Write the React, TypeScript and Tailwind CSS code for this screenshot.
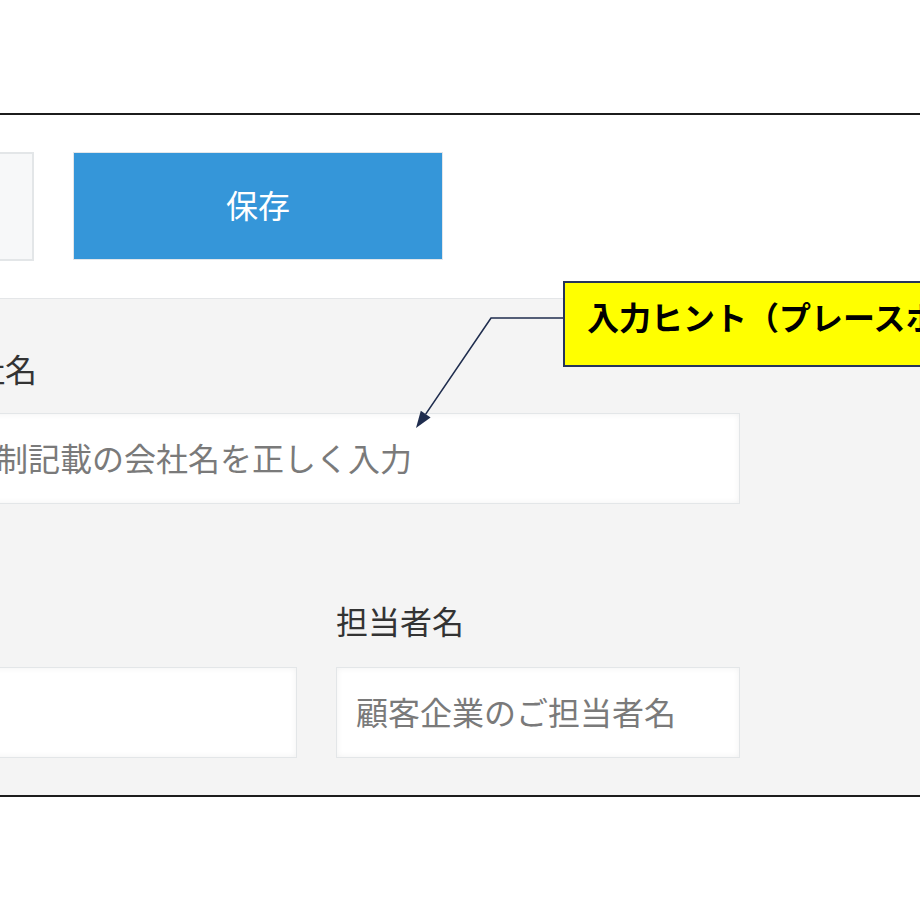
import React from "react";

const jp = { fontFamily: '"Meiryo", "Noto Sans CJK JP", "Noto Sans", sans-serif' };

function Field({ width, placeholder }: { width: string; placeholder: string }) {
  return (
    <div
      className={`${width} flex h-[91px] shrink-0 items-center border border-[#e3e6e8] bg-white pl-[19px] shadow-[inset_0_0_6px_rgba(0,0,0,0.06)]`}
    >
      <span className="mt-[-3px] whitespace-nowrap text-[32px] leading-none text-[#7a7a7a]">{placeholder}</span>
    </div>
  );
}

export default function App() {
  return (
    <div className="relative h-[920px] w-[920px] overflow-hidden bg-white" style={jp}>
      <div className="h-[113px]" />
      <div className="border-y-2 border-[#1c1c1c]">
        {/* toolbar */}
        <div className="flex h-[184px] items-start gap-[39px] border-b border-[#e4e6e8] bg-white pt-[37px]">
          <div className="ml-[-160px] h-[109px] w-[194px] border-2 border-[#e3e6e8] bg-[#f7f8f9]" />
          <button className="flex h-[108px] w-[370px] items-center justify-center border border-[#e2e6ea] bg-[#3596d9] pb-[4px] text-[32px] text-white">
            保存
          </button>
        </div>

        {/* form */}
        <div className="ml-[-40px] bg-[#f4f4f4] pb-[37px] pt-[49px]">
          <div className="ml-[-19px] text-[32px] leading-[40px] text-[#333]">会社名</div>
          <div className="mt-[25px] flex">
            <div className="flex h-[91px] w-[780px] items-center border border-[#e3e6e8] bg-white pl-[24px] shadow-[inset_0_0_6px_rgba(0,0,0,0.06)]">
              <span className="ml-[-149px] mt-[-3px] whitespace-nowrap text-[32px] leading-none text-[#7a7a7a]">
                登記簿・法制記載の会社名を正しく入力
              </span>
            </div>
          </div>

          <div className="mt-[96px] flex gap-[39px]">
            <div className="h-[40px] w-[337px]" />
            <div className="text-[32px] leading-[40px] text-[#333]">担当者名</div>
          </div>
          <div className="mt-[27px] flex gap-[39px]">
            <Field width="w-[337px]" placeholder="" />
            <Field width="w-[404px]" placeholder="顧客企業のご担当者名" />
          </div>
        </div>
      </div>

      {/* callout */}
      <div className="absolute left-[563px] top-[281px] h-[86px] w-[420px] border-2 border-[#26355a] bg-[#ffff00] pl-[22px] pt-[13px]">
        <span className="whitespace-nowrap text-[32px] font-bold leading-[40px] text-black">
          入力ヒント（プレースホルダー）
        </span>
      </div>
      <svg className="absolute left-0 top-0" width="920" height="920">
        <polyline points="563,318 491,318 425.7,414.1" fill="none" stroke="#1f2d4e" strokeWidth="1.6" />
        <polygon points="416,428 430.6,417.5 420.8,410.7" fill="#1f2d4e" />
      </svg>
    </div>
  );
}
